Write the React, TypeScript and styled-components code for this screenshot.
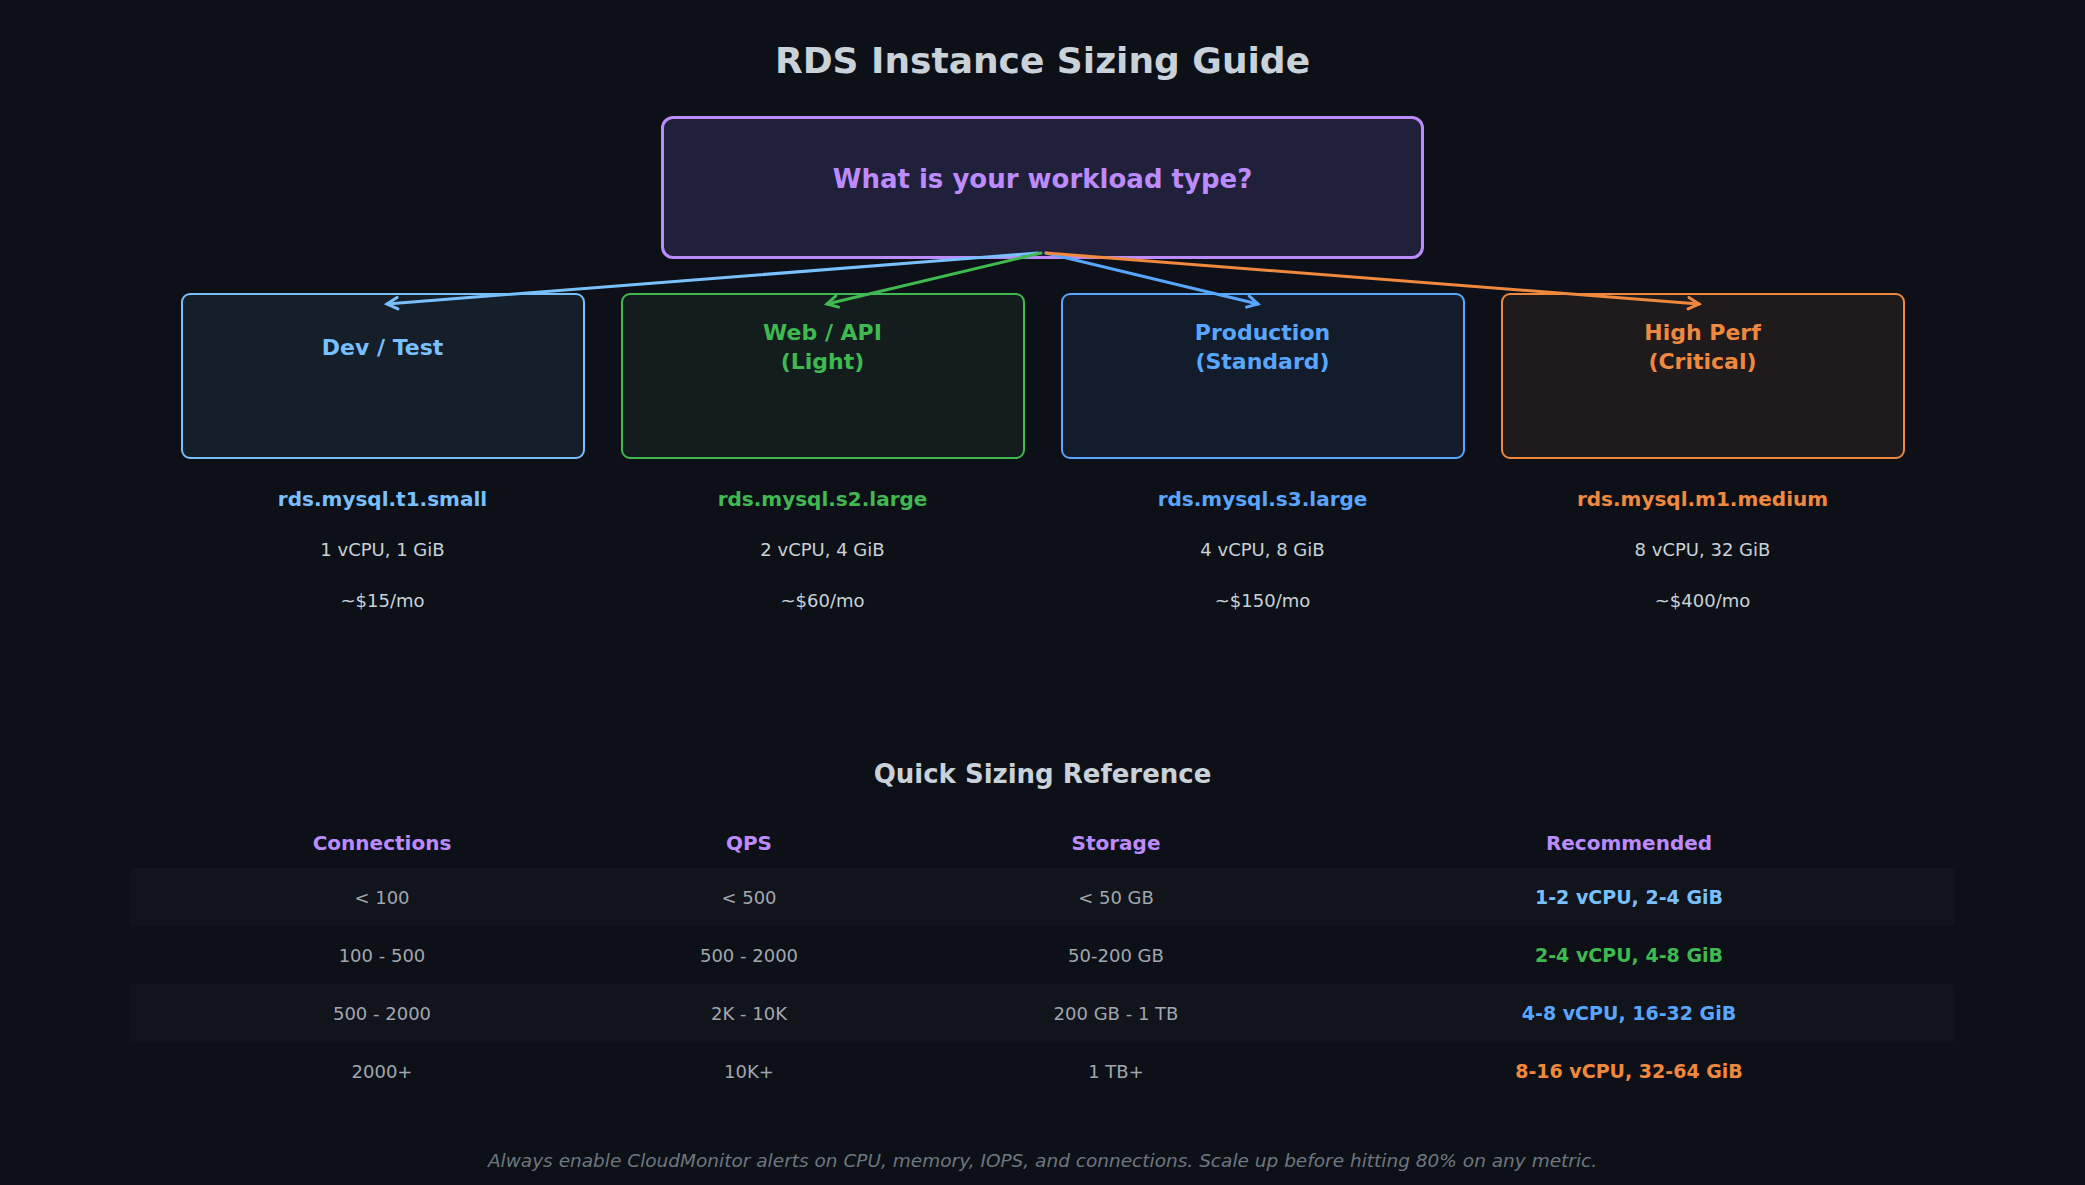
import React from "react";
import styled, { createGlobalStyle } from "styled-components";

const Global = createGlobalStyle`
  html, body { margin: 0; padding: 0; background: #0d1117; }
  body { font-family: "DejaVu Sans", "Liberation Sans", sans-serif; width: 2085px; height: 1185px; overflow: hidden; }
`;

const Page = styled.div`
  position: relative;
  width: 2085px;
  height: 1185px;
  background: #0d1117;
  display: flex;
  flex-direction: column;
  align-items: center;
`;

const Title = styled.h1`
  margin: 39px 0 0;
  height: 44px;
  line-height: 44px;
  font-size: 36px;
  font-weight: bold;
  color: #c9d1d9;
`;

const Question = styled.div`
  margin-top: 33px;
  width: 763px;
  height: 143px;
  box-sizing: border-box;
  border: 3px solid #bc8cff;
  border-radius: 12px;
  background: #21203a;
  color: #bc8cff;
  font-size: 26px;
  font-weight: bold;
  display: flex;
  justify-content: center;
  padding-top: 45px;
`;

const Cards = styled.div`
  margin-top: 34px;
  display: grid;
  grid-template-columns: repeat(4, 404px);
  column-gap: 36px;
`;

const Col = styled.div`
  display: flex;
  flex-direction: column;
  align-items: center;
`;

const Card = styled.div<{ $c: string; $bg: string }>`
  width: 404px;
  height: 166px;
  box-sizing: border-box;
  border: 2.5px solid ${p => p.$c};
  background: ${p => p.$bg};
  border-radius: 9px;
  color: ${p => p.$c};
  font-size: 22px;
  font-weight: bold;
  line-height: 29px;
  text-align: center;
  display: flex;
  align-items: center;
  justify-content: center;
  padding-bottom: 58px;
`;

const Name = styled.div<{ $c: string }>`
  margin-top: 28px;
  color: ${p => p.$c};
  font-size: 20px;
  font-weight: bold;
  line-height: 24px;
`;

const Spec = styled.div`
  margin-top: 27px;
  color: #c9d1d9;
  font-size: 18px;
  line-height: 24px;
`;

const Section = styled.h2`
  margin: 145px 0 0;
  font-size: 26px;
  font-weight: bold;
  color: #c9d1d9;
  line-height: 32px;
`;

const Table = styled.div`
  margin-top: 28px;
  width: 1825px;
  display: flex;
  flex-direction: column;
`;

const Row = styled.div<{ $stripe?: boolean; $h: number }>`
  display: grid;
  grid-template-columns: 504px 230px 504px 522px 1fr;
  height: ${p => p.$h}px;
  align-items: center;
  background: ${p => (p.$stripe ? "#11141b" : "transparent")};
  border-radius: 4px;
`;

const Cell = styled.div<{ $c?: string; $bold?: boolean }>`
  text-align: center;
  font-size: ${p => (p.$bold ? "19px" : "18px")};
  font-weight: ${p => (p.$bold ? "bold" : "normal")};
  color: ${p => p.$c || "#a0a7b0"};
`;

const Head = styled(Cell)`
  color: #bc8cff;
  font-size: 20px;
  font-weight: bold;
`;

const Foot = styled.div`
  margin-top: 50px;
  font-size: 18.5px;
  font-style: italic;
  color: #6e7681;
`;

const Arrows = styled.svg`
  position: absolute;
  left: 0;
  top: 0;
  pointer-events: none;
`;

const cards = [
  { t: "Dev / Test", c: "#79c0ff", bg: "#151f2a", n: "rds.mysql.t1.small", s: "1 vCPU, 1 GiB", p: "~$15/mo" },
  { t: "Web / API\n(Light)", c: "#3fb950", bg: "#131d1e", n: "rds.mysql.s2.large", s: "2 vCPU, 4 GiB", p: "~$60/mo" },
  { t: "Production\n(Standard)", c: "#58a6ff", bg: "#131c2a", n: "rds.mysql.s3.large", s: "4 vCPU, 8 GiB", p: "~$150/mo" },
  { t: "High Perf\n(Critical)", c: "#f0883e", bg: "#1f1b1d", n: "rds.mysql.m1.medium", s: "8 vCPU, 32 GiB", p: "~$400/mo" },
];

const rows = [
  ["< 100", "< 500", "< 50 GB", "1-2 vCPU, 2-4 GiB", "#79c0ff"],
  ["100 - 500", "500 - 2000", "50-200 GB", "2-4 vCPU, 4-8 GiB", "#3fb950"],
  ["500 - 2000", "2K - 10K", "200 GB - 1 TB", "4-8 vCPU, 16-32 GiB", "#58a6ff"],
  ["2000+", "10K+", "1 TB+", "8-16 vCPU, 32-64 GiB", "#f0883e"],
];

const arrows = [
  { x1: 1038, y1: 253, x2: 387, y2: 304, c: "#79c0ff" },
  { x1: 1041, y1: 253, x2: 827, y2: 304, c: "#3fb950" },
  { x1: 1046, y1: 253, x2: 1258, y2: 304, c: "#58a6ff" },
  { x1: 1046, y1: 253, x2: 1699, y2: 304, c: "#f0883e" },
];

function Head4({ x1, y1, x2, y2, c }: { x1: number; y1: number; x2: number; y2: number; c: string }) {
  const a = Math.atan2(y2 - y1, x2 - x1);
  const L = 12;
  const p1 = [x2 - L * Math.cos(a - 0.5), y2 - L * Math.sin(a - 0.5)];
  const p2 = [x2 - L * Math.cos(a + 0.5), y2 - L * Math.sin(a + 0.5)];
  return (
    <g stroke={c} strokeWidth={3} fill="none" strokeLinecap="round">
      <line x1={x1} y1={y1} x2={x2} y2={y2} />
      <polyline points={`${p1[0]},${p1[1]} ${x2},${y2} ${p2[0]},${p2[1]}`} />
    </g>
  );
}

export default function App() {
  return (
    <Page>
      <Global />
      <Title>RDS Instance Sizing Guide</Title>
      <Question>What is your workload type?</Question>
      <Cards>
        {cards.map(c => (
          <Col key={c.n}>
            <Card $c={c.c} $bg={c.bg}>
              <div>
                {c.t.split("\n").map(l => (
                  <div key={l}>{l}</div>
                ))}
              </div>
            </Card>
            <Name $c={c.c}>{c.n}</Name>
            <Spec>{c.s}</Spec>
            <Spec>{c.p}</Spec>
          </Col>
        ))}
      </Cards>
      <Section>Quick Sizing Reference</Section>
      <Table>
        <Row $h={50}>
          <Head>Connections</Head>
          <Head>QPS</Head>
          <Head>Storage</Head>
          <Head>Recommended</Head>
        </Row>
        {rows.map((r, i) => (
          <Row key={i} $h={58} $stripe={i % 2 === 0}>
            <Cell>{r[0]}</Cell>
            <Cell>{r[1]}</Cell>
            <Cell>{r[2]}</Cell>
            <Cell $bold $c={r[4]}>{r[3]}</Cell>
          </Row>
        ))}
      </Table>
      <Foot>Always enable CloudMonitor alerts on CPU, memory, IOPS, and connections. Scale up before hitting 80% on any metric.</Foot>
      <Arrows width={2085} height={1185}>
        {arrows.map((a, i) => (
          <Head4 key={i} {...a} />
        ))}
      </Arrows>
    </Page>
  );
}
